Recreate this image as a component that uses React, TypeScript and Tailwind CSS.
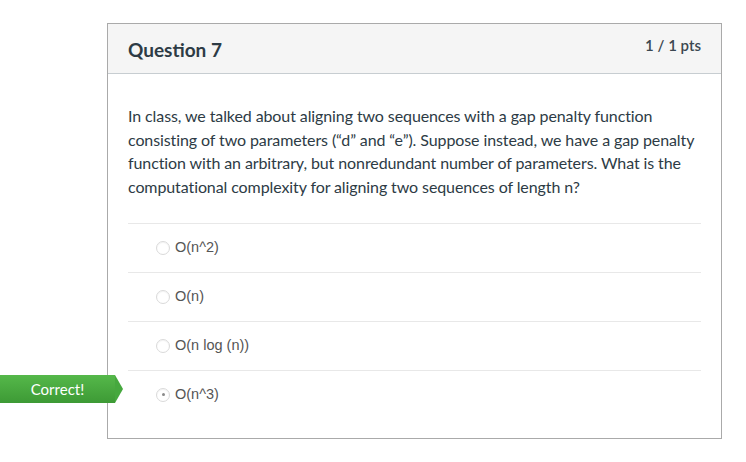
import React from "react";

const answers = [
  { text: "O(n^2)", selected: false },
  { text: "O(n)", selected: false },
  { text: "O(n log (n))", selected: false },
  { text: "O(n^3)", selected: true },
];

function Radio({ checked }: { checked: boolean }) {
  return (
    <span className="flex h-[14px] w-[14px] items-center justify-center rounded-full border border-[#dadada] bg-white shadow-[inset_0_1px_1px_rgba(0,0,0,0.05)]">
      {checked && <span className="h-[3px] w-[3px] rounded-full bg-[#8a8a8a]" />}
    </span>
  );
}

export default function App() {
  return (
    <div className="h-[462px] w-[746px] bg-white pt-[23px] font-['Lato','Noto_Sans',sans-serif] text-[#2d3b45]">
      <div className="relative ml-[107px] h-[416px] w-[615px] border border-[#aaaaaa]">
        {/* header */}
        <div className="flex h-[50px] items-start justify-between border-b border-[#c7cdd1] bg-[#f5f5f5] px-[20px]">
          <h2 className="pt-[14px] text-[19px] font-bold leading-[24px]">Question 7</h2>
          <span className="pt-[11px] text-[15px] font-semibold leading-[20px] text-[#3b4750]">1 / 1 pts</span>
        </div>

        <div className="px-[20px] pt-[30px]">
          <p className="whitespace-nowrap text-[16px] leading-[23.7px] tracking-[-0.1px]">
            In class, we talked about aligning two sequences with a gap penalty function
            <br />
            consisting of two parameters (“d” and “e”). Suppose instead, we have a gap penalty
            <br />
            function with an arbitrary, but nonredundant number of parameters. What is the
            <br />
            computational complexity for aligning two sequences of length n?
          </p>

          <div className="mt-[24px]">
            {answers.map((a) => (
              <div
                key={a.text}
                className="relative flex h-[49px] items-center gap-[5px] border-t border-[#e8e8e8] pl-[28px] font-['Liberation_Sans',Arial,sans-serif] text-[14.5px] text-[#555]"
              >
                <Radio checked={a.selected} />
                <span>{a.text}</span>
                {a.selected && (
                  <div className="absolute left-[-128px] top-[4px] flex h-[28px] items-center">
                    <div className="flex h-[28px] w-[115px] items-center justify-center bg-gradient-to-b from-[#55b84a] to-[#3d9a35] font-['Lato',sans-serif] text-[15px] text-white">
                      Correct!
                    </div>
                    <div className="h-0 w-0 border-y-[14px] border-l-[8px] border-y-transparent border-l-[#46a83e]" />
                  </div>
                )}
              </div>
            ))}
          </div>
        </div>
      </div>
    </div>
  );
}
